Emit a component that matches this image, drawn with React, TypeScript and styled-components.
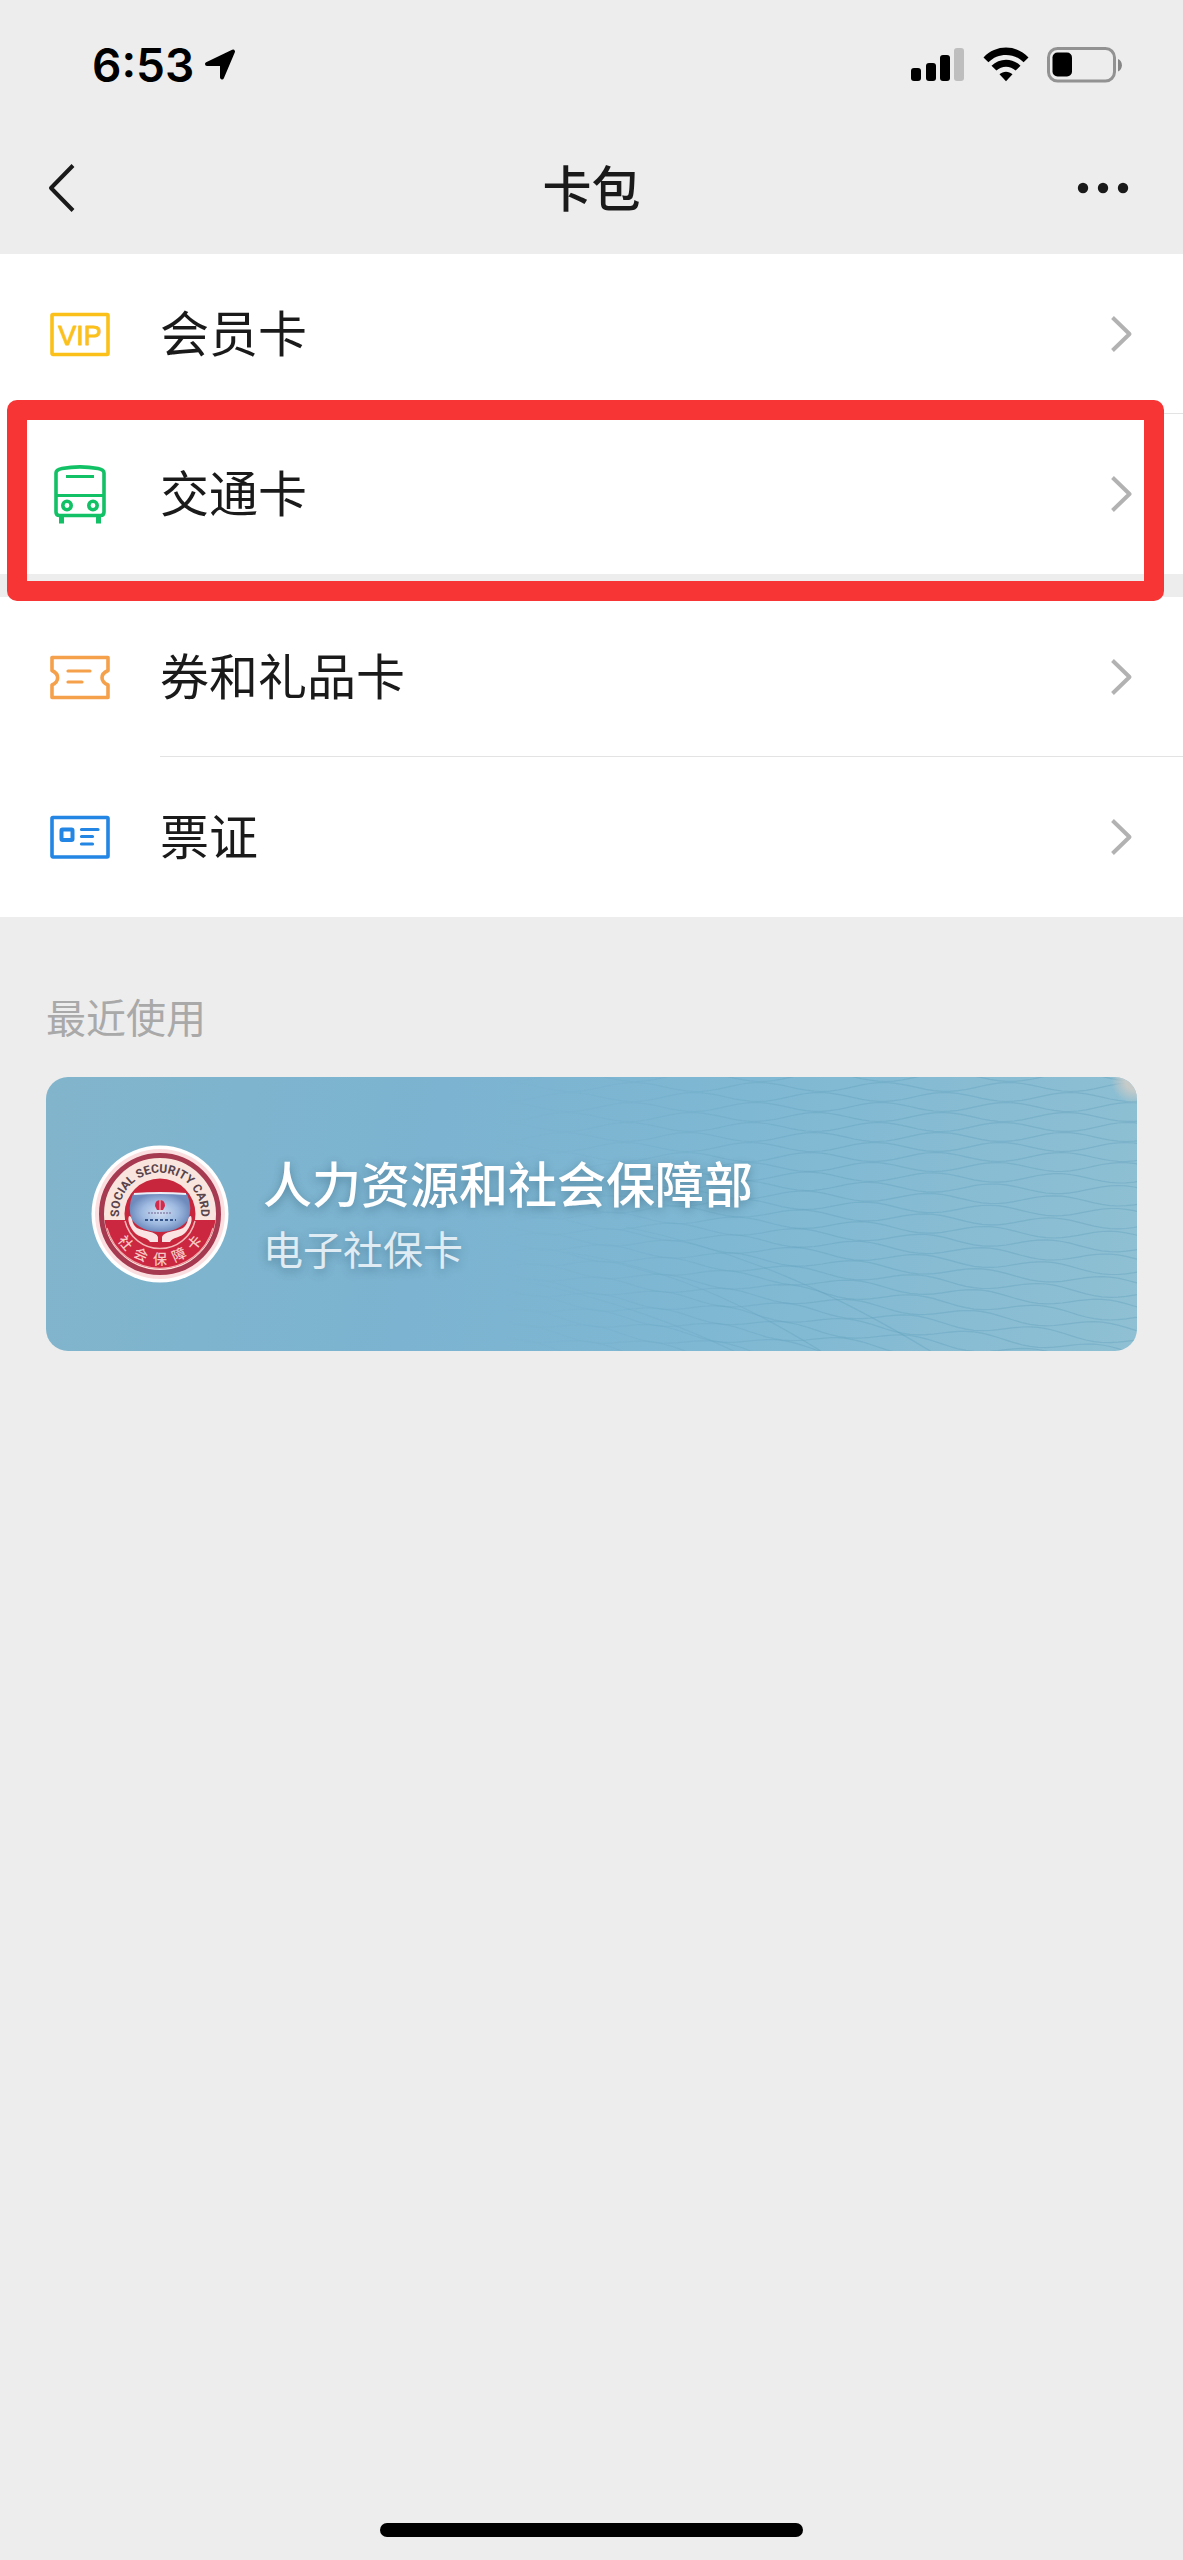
import React from 'react';
import styled, { createGlobalStyle } from 'styled-components';

const GlobalStyle = createGlobalStyle`
  * { box-sizing: border-box; }
  html, body { margin: 0; padding: 0; background: #ededed; }
  body {
    font-family: 'Noto Sans CJK SC', 'Noto Sans', sans-serif;
    color: #1a1a1a;
    -webkit-font-smoothing: antialiased;
  }
  svg { flex: none; }
`;

const Page = styled.div`
  display: flex;
  flex-direction: column;
  min-height: 100vh;
  background: #ededed;
`;

const StatusBar = styled.div`
  display: flex;
  align-items: center;
  justify-content: space-between;
  height: 122px;
  padding: 8px 60px 0 92px;
`;

const StatusGroup = styled.div<{ $gap: number }>`
  display: flex;
  align-items: center;
  gap: ${(p) => p.$gap}px;
`;

const Clock = styled.time`
  font-family: Inter, 'Liberation Sans', sans-serif;
  font-size: 46px;
  font-weight: 600;
  line-height: 56px;
  color: #000;
`;

const NavBar = styled.header`
  display: grid;
  grid-template-columns: 160px 1fr 160px;
  align-items: center;
  height: 132px;
`;

const NavButton = styled.button<{ $side: 'left' | 'right' }>`
  display: flex;
  justify-content: ${(p) => (p.$side === 'left' ? 'flex-start' : 'flex-end')};
  align-items: center;
  height: 100%;
  padding: 0 48px;
  border: 0;
  background: none;
  color: #1a1a1a;
`;

const NavTitle = styled.h1`
  margin: 0;
  padding-bottom: 4px;
  font-size: 49px;
  font-weight: 500;
  line-height: 72px;
  text-align: center;
`;

const Groups = styled.main`
  display: flex;
  flex-direction: column;
`;

const Group = styled.ul`
  margin: 0 0 23px;
  padding: 0;
  list-style: none;
  background: #fff;

  &:last-of-type { margin-bottom: 0; }
`;

const Item = styled.li`
  position: relative;
`;

const RowButton = styled.button`
  display: flex;
  align-items: center;
  gap: 48px;
  width: 100%;
  height: 160px;
  padding: 0 0 0 48px;
  border: 0;
  background: none;
  color: inherit;
  font: inherit;
  text-align: left;
`;

const RowBody = styled.span<{ $divided: boolean }>`
  display: flex;
  flex: 1;
  align-items: center;
  justify-content: space-between;
  height: 100%;
  padding-right: 48px;
  border-bottom: ${(p) => (p.$divided ? '1px solid #e3e3e3' : '0')};
`;

const RowLabel = styled.span`
  padding-bottom: 6px;
  font-size: 49px;
  line-height: 72px;
`;

const Highlight = styled.div`
  position: absolute;
  z-index: 1;
  inset: -14px 19px -27px 7px;
  border: 20px solid #f83535;
  border-radius: 10px;
  pointer-events: none;
`;

const Recent = styled.section`
  padding: 69px 46px 0;
`;

const RecentTitle = styled.h2`
  margin: 0 0 31px;
  font-size: 40px;
  font-weight: 400;
  line-height: 60px;
  color: #a9a9a9;
`;

const Card = styled.button`
  position: relative;
  display: flex;
  align-items: center;
  gap: 33px;
  width: 100%;
  height: 274px;
  padding: 0 44px;
  overflow: hidden;
  border: 0;
  border-radius: 22px;
  background: linear-gradient(100deg, #82b5cc 0%, #7bb3d0 35%, #7fb8d3 62%, #8fc0d3 100%);
  color: #fff;
  font: inherit;
  text-align: left;
`;

const Pattern = styled.svg`
  position: absolute;
  inset: 0;
  width: 100%;
  height: 100%;
`;

const Emblem = styled.svg`
  position: relative;
`;

const CardText = styled.span`
  position: relative;
  display: flex;
  flex-direction: column;
  padding-bottom: 4px;
  text-shadow: 0 3px 10px rgba(40, 80, 105, 0.45);
`;

const CardName = styled.span`
  font-size: 49px;
  font-weight: 500;
  line-height: 72px;
`;

const CardKind = styled.span`
  font-size: 40px;
  line-height: 60px;
  color: #e0ecf3;
`;

const HomeIndicator = styled.div`
  width: 423px;
  height: 14px;
  margin: auto auto 23px;
  border-radius: 7px;
  background: #000;
`;

const LocationArrow = () => (
  <svg width="34" height="34" viewBox="0 0 34 34" aria-hidden="true">
    <path d="M3 16 29 3.500 18 29.500V16Z" fill="#000" stroke="#000" strokeWidth="4" strokeLinejoin="round" />
  </svg>
);

const SignalIcon = () => (
  <svg width="54" height="36" viewBox="0 0 54 36" aria-hidden="true">
    <rect x="0" y="21" width="10" height="13" rx="3" />
    <rect x="15" y="16" width="10" height="18" rx="3" />
    <rect x="29" y="8" width="10" height="26" rx="3" />
    <rect x="43" y="1" width="10" height="33" rx="3" fill="#bebebe" />
  </svg>
);

const WifiIcon = () => (
  <svg width="46" height="36" viewBox="0 0 46 36" aria-hidden="true">
    <path d="M.5 10.500C13-2.700 33-2.700 45.500 10.500L40.600 15.300C31 5.500 15 5.500 5.400 15.300Z" />
    <path d="M8.500 18.700C16.500 10.600 29.500 10.600 37.500 18.700L32.600 23.600C27.200 18.300 18.800 18.300 13.400 23.600Z" />
    <path d="M16.500 27.200C20.200 23.800 25.800 23.800 29.500 27.200L23 34.300Z" />
  </svg>
);

const BatteryIcon = () => (
  <svg width="76" height="36" viewBox="0 0 76 36" aria-hidden="true">
    <rect x="1.500" y="1.500" width="66" height="32.500" rx="9" fill="none" stroke="#929292" strokeWidth="3" />
    <rect x="5.500" y="5.500" width="19.500" height="24" rx="5" />
    <path d="M71 12C76.200 14 76.200 22.500 71 24.500Z" fill="#858585" />
  </svg>
);

const BackIcon = () => (
  <svg width="28" height="52" viewBox="0 0 28 52" fill="none" stroke="currentColor" strokeWidth="4" aria-hidden="true">
    <path d="M25 3.500 3 26 25 48.500" strokeLinejoin="round" />
  </svg>
);

const MoreIcon = () => (
  <svg width="58" height="12" viewBox="0 0 58 12" fill="currentColor" aria-hidden="true">
    <circle cx="6" cy="6" r="5.200" />
    <circle cx="26" cy="6" r="5.200" />
    <circle cx="46" cy="6" r="5.200" />
  </svg>
);

const ChevronIcon = () => (
  <svg width="26" height="40" viewBox="0 0 26 40" fill="none" stroke="#b2b2b2" strokeWidth="4" aria-hidden="true">
    <path d="M3.500 3.500 20.500 20 3.500 36.500" strokeLinejoin="round" />
  </svg>
);

const RowIcon = ({ color, children }: { color: string; children: React.ReactNode }) => (
  <svg width="64" height="64" viewBox="0 0 64 64" fill="none" stroke={color} strokeWidth="3.600" strokeLinejoin="round" aria-hidden="true">
    {children}
  </svg>
);

const VipIcon = () => (
  <RowIcon color="#fbc11a">
    <rect x="4" y="12.500" width="56" height="40" rx="1" />
    <text x="32" y="42.500" textAnchor="middle" fontFamily="'Liberation Sans', Arial, sans-serif" fontSize="27" fill="#fbc11a" strokeWidth="0.9">
      VIP
    </text>
  </RowIcon>
);

const BusIcon = () => (
  <RowIcon color="#12c165">
    <path d="M8 11C8 8.500 10 7.300 14 6.500C25 4.500 39 4.500 50 6.500C54 7.300 56 8.500 56 11V50Q56 53.500 52.500 53.500H11.500Q8 53.500 8 50Z" />
    <path d="M18 14.500H46M8 33.500H56" strokeWidth="3.200" />
    <circle cx="19" cy="43.500" r="4.200" />
    <circle cx="45" cy="43.500" r="4.200" />
    <path d="M13.500 54V61.500M50.500 54V61.500" strokeWidth="5" />
  </RowIcon>
);

const TicketIcon = () => (
  <RowIcon color="#f5a04b">
    <path d="M4 12.500H60V25.500C52 29 52 36.500 60 40V52.500H4V40C11.500 36.500 11.500 29 4 25.500Z" />
    <path d="M20 26H42M20 37H34" strokeLinecap="round" strokeWidth="3.200" />
  </RowIcon>
);

const IdIcon = () => (
  <RowIcon color="#2385e4">
    <rect x="4" y="12.500" width="56" height="39.500" rx="1" />
    <rect x="13.500" y="24.500" width="11" height="10.500" rx="1" strokeWidth="4" />
    <path d="M33.500 24.500H50M33.500 31.500H44.500M33.500 39H44.500" strokeLinecap="round" strokeWidth="3.200" />
  </RowIcon>
);

/** One undulating line of the card's net; neighbours run in antiphase and enclose long cells. */
const wave = (index: number) => {
  const points: string[] = [];
  for (let x = 440; x <= 1100; x += 8) {
    const reach = (x - 440) / 660;
    const sag = Math.max(0, index - 12) * 4.200 * (reach - 0.6);
    const phase = ((x + index * 1.500) / 125) * Math.PI * 2 + (index % 2 ? Math.PI : 0);
    points.push(`${x} ${(-30 + index * 10 + sag + 4.500 * Math.sin(phase)).toFixed(1)}`);
  }
  return `M${points.join('L')}`;
};

const NetPattern = () => (
  <Pattern viewBox="0 0 1091 274" preserveAspectRatio="xMaxYMid slice" aria-hidden="true">
    <defs>
      <linearGradient id="netFade" x1="0" x2="1">
        <stop offset="0.42" stopColor="#fff" stopOpacity="0" />
        <stop offset="0.72" stopColor="#fff" stopOpacity="1" />
      </linearGradient>
      <mask id="netMask">
        <rect width="1091" height="274" fill="url(#netFade)" />
      </mask>
      <radialGradient id="cornerGlow">
        <stop offset="0.4" stopColor="#c6cbc9" />
        <stop offset="1" stopColor="#c6cbc9" stopOpacity="0" />
      </radialGradient>
    </defs>
    <g mask="url(#netMask)" fill="none" stroke="#5f9dba" strokeOpacity="0.36" strokeWidth="1.200">
      {Array.from({ length: 36 }, (_, i) => (
        <path key={i} d={wave(i)} />
      ))}
      <path d="M520 175C620 190 700 225 800 290M580 150C700 175 800 220 910 290M480 205C560 220 640 250 700 280" />
    </g>
    <circle cx="1089" cy="3" r="24" fill="url(#cornerGlow)" />
  </Pattern>
);

const SecurityEmblem = () => (
  <Emblem width="140" height="140" viewBox="-70 -70 140 140" aria-hidden="true">
    <defs>
      <path id="topArc" d="M-40.500 6A41 41 0 1 1 40.500 6" />
      <radialGradient id="globe">
        <stop offset="0" stopColor="#d3e0f3" />
        <stop offset="0.6" stopColor="#9db9e0" />
        <stop offset="1" stopColor="#6f8bbd" />
      </radialGradient>
    </defs>
    <circle r="68.500" fill="#fff" />
    <circle r="65" fill="#fbdfe0" />
    <circle r="58.500" fill="#f9e5dd" stroke="#a63a50" strokeWidth="5" />
    <path d="M-55.500 6A56 56 0 0 0 55.500 6Z" fill="#cb2740" />
    <path d="M-53 14A55 55 0 0 0 53 14" fill="none" stroke="#f1a9ab" strokeWidth="1.200" />
    <circle r="35.500" fill="#c7263c" />
    <path d="M-35 7A36 36 0 0 0 35 7" fill="none" stroke="#f3b7b7" strokeWidth="1.500" />
    <path d="M-27-20Q0-22 27-20Q33-6 28 6Q18 18 0 18Q-18 18-28 6Q-33-6-27-20Z" fill="url(#globe)" />
    <path d="M-26-20Q0-22 26-20" fill="none" stroke="#e9eef7" strokeWidth="2" />
    <path d="M-5-8Q-5-14 0-14Q5-14 5-8L3-4H-3Z" fill="#d22c4d" />
    <path d="M0-14V-3" stroke="#f5c7d2" strokeWidth="1" />
    <path d="M-12-1H12" stroke="#8c86ad" strokeWidth="1.400" strokeDasharray="2 1" />
    <path d="M-15 6H16" stroke="#35558d" strokeWidth="2" strokeDasharray="3 2" />
    <path d="M-31 2C-27 2-29 10-23 14C-15 18-4 17-2 23V28H-10C-12 23-21 24-26 18C-30 13-33 6-31 2Z" fill="#fbe3e3" />
    <path d="M31 2C27 2 29 10 23 14C15 18 4 17 2 23V28H10C12 23 21 24 26 18C30 13 33 6 31 2Z" fill="#fbe3e3" />
    <text fontFamily="Roboto, 'Liberation Sans', sans-serif" fontSize="12" fontWeight="700" fill="#57434b" textAnchor="middle">
      <textPath href="#topArc" startOffset="50%">SOCIAL SECURITY CARD</textPath>
    </text>
    <g fontFamily="'Noto Sans CJK SC', sans-serif" fontSize="14" fontWeight="500" fill="#f7c9c4" textAnchor="middle">
      {['社', '会', '保', '障', '卡'].map((char, i) => (
        <text key={char} y="50" transform={`rotate(${(2 - i) * 25})`}>
          {char}
        </text>
      ))}
    </g>
  </Emblem>
);

type Entry = { label: string; icon: React.ReactNode; highlighted?: boolean };

const groups: Entry[][] = [
  [
    { label: '会员卡', icon: <VipIcon /> },
    { label: '交通卡', icon: <BusIcon />, highlighted: true },
  ],
  [
    { label: '券和礼品卡', icon: <TicketIcon /> },
    { label: '票证', icon: <IdIcon /> },
  ],
];

export default function App() {
  return (
    <Page>
      <GlobalStyle />
      <StatusBar>
        <StatusGroup $gap={10}>
          <Clock>6:53</Clock>
          <LocationArrow />
        </StatusGroup>
        <StatusGroup $gap={18}>
          <SignalIcon />
          <WifiIcon />
          <BatteryIcon />
        </StatusGroup>
      </StatusBar>
      <NavBar>
        <NavButton $side="left" aria-label="返回">
          <BackIcon />
        </NavButton>
        <NavTitle>卡包</NavTitle>
        <NavButton $side="right" aria-label="更多">
          <MoreIcon />
        </NavButton>
      </NavBar>
      <Groups>
        {groups.map((entries, g) => (
          <Group key={g}>
            {entries.map((entry, i) => (
              <Item key={entry.label}>
                <RowButton>
                  {entry.icon}
                  <RowBody $divided={i < entries.length - 1}>
                    <RowLabel>{entry.label}</RowLabel>
                    <ChevronIcon />
                  </RowBody>
                </RowButton>
                {entry.highlighted && <Highlight />}
              </Item>
            ))}
          </Group>
        ))}
        <Recent>
          <RecentTitle>最近使用</RecentTitle>
          <Card>
            <NetPattern />
            <SecurityEmblem />
            <CardText>
              <CardName>人力资源和社会保障部</CardName>
              <CardKind>电子社保卡</CardKind>
            </CardText>
          </Card>
        </Recent>
      </Groups>
      <HomeIndicator />
    </Page>
  );
}
